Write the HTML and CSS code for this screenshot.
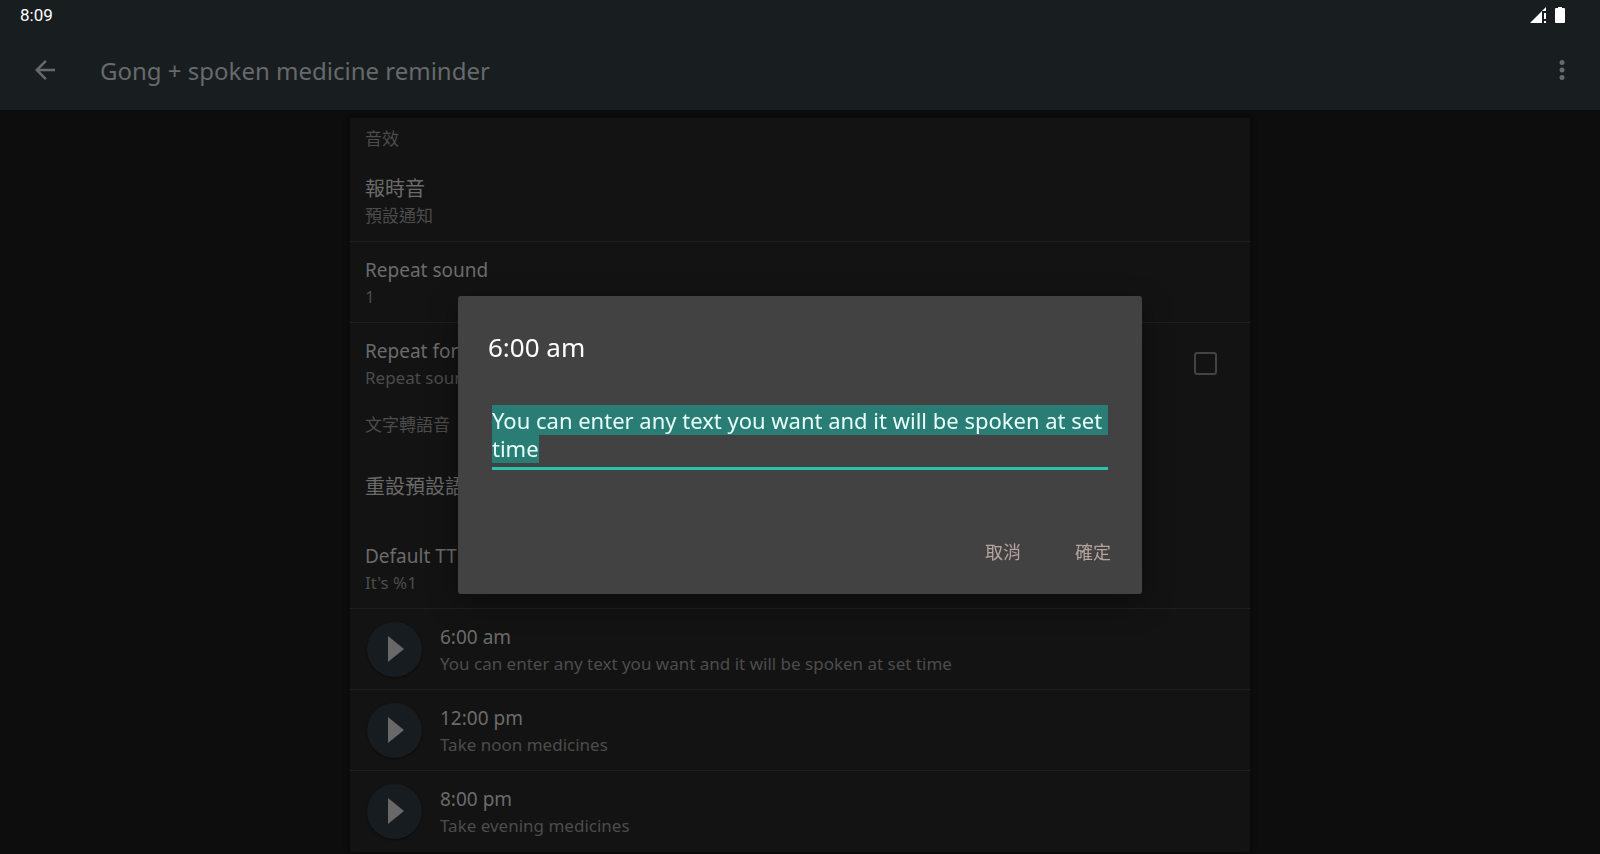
FILE: index.html
```html
<!DOCTYPE html>
<html lang="zh-TW">
<head>
    <meta charset="UTF-8">
    <meta name="viewport" content="width=device-width, initial-scale=1.0">
    <title>Gong + spoken medicine reminder</title>
    <link rel="stylesheet" href="styles.css">
</head>
<body>
    <header class="top">
        <div class="status-bar">
            <span>8:09</span>
            <div class="status-icons">
                <svg width="16" height="16" viewBox="0 0 16 16" fill="#fff">
                    <path d="M0 16L12 4v12z"/>
                    <path d="M12 4L16 0v4z"/>
                    <path d="M14 6h2v6h-2zM14 14h2v2h-2z"/>
                </svg>
                <svg width="10" height="16" viewBox="0 0 10 16" fill="#fff">
                    <path d="M3 0h4v1h2a1 1 0 0 1 1 1v13a1 1 0 0 1-1 1H1a1 1 0 0 1-1-1V2a1 1 0 0 1 1-1h2z"/>
                </svg>
            </div>
        </div>
        <div class="app-bar">
            <button type="button" class="icon-button" aria-label="返回">
                <svg width="30" height="30" viewBox="0 0 24 24" fill="#67696b">
                    <path d="M20 11H7.830l5.590-5.590L12 4l-8 8 8 8 1.410-1.410L7.830 13H20v-2z"/>
                </svg>
            </button>
            <h1>Gong + spoken medicine reminder</h1>
            <button type="button" class="icon-button" aria-label="更多選項">
                <svg width="30" height="30" viewBox="0 0 24 24" fill="#67696b">
                    <circle cx="12" cy="6" r="2"/>
                    <circle cx="12" cy="12" r="2"/>
                    <circle cx="12" cy="18" r="2"/>
                </svg>
            </button>
        </div>
    </header>

    <main class="settings">
        <section class="group">
            <h2>音效</h2>
            <div class="row">
                <div class="text">
                    <p class="title zh">報時音</p>
                    <p class="summary">預設通知</p>
                </div>
            </div>
            <div class="row">
                <div class="text">
                    <p class="title">Repeat sound</p>
                    <p class="summary">1</p>
                </div>
            </div>
            <div class="row last">
                <label class="text" for="repeatFor">
                    <span class="title">Repeat for</span>
                    <span class="summary">Repeat sound</span>
                </label>
                <input type="checkbox" id="repeatFor">
            </div>
        </section>
        <section class="group">
            <h2>文字轉語音</h2>
            <div class="row last">
                <p class="title zh">重設預設語</p>
            </div>
            <div class="row">
                <div class="text">
                    <p class="title">Default TT</p>
                    <p class="summary">It's %1</p>
                </div>
            </div>
            <div class="row">
                <button type="button" class="play" aria-label="6:00 am">
                    <svg width="16" height="26" viewBox="0 0 16 26" fill="#686868"><path d="M0 0l16 13L0 26z"/></svg>
                </button>
                <div class="text">
                    <p class="title">6:00 am</p>
                    <p class="summary">You can enter any text you want and it will be spoken at set time</p>
                </div>
            </div>
            <div class="row">
                <button type="button" class="play" aria-label="12:00 pm">
                    <svg width="16" height="26" viewBox="0 0 16 26" fill="#686868"><path d="M0 0l16 13L0 26z"/></svg>
                </button>
                <div class="text">
                    <p class="title">12:00 pm</p>
                    <p class="summary">Take noon medicines</p>
                </div>
            </div>
            <div class="row last">
                <button type="button" class="play" aria-label="8:00 pm">
                    <svg width="16" height="26" viewBox="0 0 16 26" fill="#686868"><path d="M0 0l16 13L0 26z"/></svg>
                </button>
                <div class="text">
                    <p class="title">8:00 pm</p>
                    <p class="summary">Take evening medicines</p>
                </div>
            </div>
        </section>
    </main>

    <div class="overlay">
        <form class="dialog" role="dialog">
            <label class="dialog-title" for="spokenText">6:00 am</label>
            <textarea id="spokenText" rows="2" spellcheck="false" autofocus>You can enter any text you want and it will be spoken at set time</textarea>
            <div class="dialog-buttons">
                <button type="button">取消</button>
                <button type="button">確定</button>
            </div>
        </form>
    </div>

    <script>
        // open the dialog with the whole text selected
        var spokenText = document.getElementById('spokenText');
        spokenText.focus();
        spokenText.select();
    </script>
</body>
</html>
```

FILE: styles.css
```css
* {
    box-sizing: border-box;
}
body {
    margin: 0;
    height: 100vh;
    overflow: hidden;
    background-color: #0d0d0d;
    color: #6b6b6b;
    font-family: "Noto Sans", "Noto Sans CJK TC", sans-serif;
}
h1, h2, p {
    margin: 0;
    font-weight: normal;
}
button {
    padding: 0;
    border: none;
    background: none;
    font-family: inherit;
    cursor: pointer;
}
svg {
    display: block;
}

/* status bar and app bar */
.top {
    background-color: #181d20;
}
.status-bar {
    display: flex;
    justify-content: space-between;
    align-items: center;
    height: 30px;
    padding: 0 35px 0 20px;
    color: #fff;
    font-family: Roboto, sans-serif;
    font-size: 17px;
}
.status-icons {
    display: flex;
    gap: 9px;
}
.app-bar {
    display: flex;
    align-items: center;
    height: 80px;
    padding: 0 23px 0 30px;
}
.app-bar h1 {
    flex: 1;
    padding-left: 40px;
    color: #67696b;
    font-size: 24px;
}

/* settings list */
.settings {
    max-width: 900px;
    margin: 8px auto 0;
    background-color: #131313;
    border-radius: 2px;
    box-shadow: 0 0 6px rgba(0, 0, 0, 0.5);
}
.group h2 {
    height: 43px;
    padding: 0 15px;
    color: #4c4c4c;
    font-size: 17px;
    line-height: 42px;
}
.row {
    display: flex;
    align-items: center;
    min-height: 81px;
    padding: 0 15px;
    border-bottom: 1px solid #1f1f1f;
}
.row.last {
    border-bottom-color: transparent;
}
.text {
    flex: 1;
    padding-top: 4px;
}
.title {
    display: block;
    font-size: 19px;
    line-height: 26px;
}
.title.zh {
    font-size: 20px;
}
.summary {
    display: block;
    color: #4c4c4c;
    font-size: 17px;
    line-height: 28px;
}
.row input[type="checkbox"] {
    appearance: none;
    width: 23px;
    height: 23px;
    margin: 0 18px 0 0;
    border: 2px solid #434343;
    border-radius: 3px;
}
.play {
    display: flex;
    align-items: center;
    justify-content: center;
    width: 55px;
    height: 55px;
    margin: 0 18px 0 2px;
    padding-left: 2px;
    border-radius: 50%;
    background-color: #171c20;
    box-shadow: 0 1px 2px rgba(0, 0, 0, 0.5);
}

/* dialog */
.overlay {
    position: fixed;
    inset: 0;
    display: flex;
    align-items: center;
    justify-content: center;
    padding-top: 36px;
}
.dialog {
    display: flex;
    flex-direction: column;
    width: 684px;
    max-width: 90%;
    padding: 30px;
    border-radius: 3px;
    background-color: #424242;
    box-shadow: 0 10px 30px rgba(0, 0, 0, 0.35);
}
.dialog-title {
    color: #fff;
    font-size: 26px;
    line-height: 42px;
}
.dialog textarea {
    height: 67px;
    margin: 35px 4px 0;
    padding: 3px 0 0;
    border: none;
    border-bottom: 3px solid #2fc0b0;
    outline: none;
    background: none;
    color: #fff;
    font-family: inherit;
    font-size: 22px;
    line-height: 28px;
    resize: none;
    overflow: hidden;
}
.dialog textarea::selection {
    background-color: #2a7d74;
    color: #e8fffc;
}
.dialog-buttons {
    display: flex;
    justify-content: flex-end;
    gap: 54px;
    margin-top: 70px;
    padding-right: 1px;
}
.dialog-buttons button {
    color: #b5a39e;
    font-size: 18px;
    line-height: 24px;
}
```
